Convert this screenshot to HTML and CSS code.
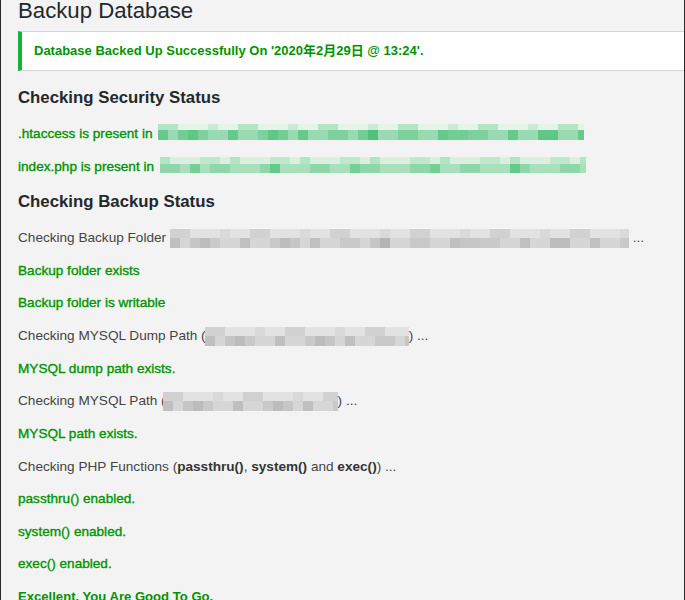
FILE: index.html
```html
<!DOCTYPE html>
<html lang="en">
<head>
<meta charset="utf-8">
<title>Backup Database</title>
<link rel="stylesheet" href="styles.css">
</head>
<body>
<div class="wrap">
  <h1 class="title">Backup Database</h1>
  <div class="notice">
    <p>Database Backed Up Successfully On '2020年2月29日 @ 13:24'.</p>
  </div>

  <h3 class="section">Checking Security Status</h3>
  <p class="ok">.htaccess is present in <span class="blur blur-green"></span></p>
  <p class="ok">index.php is present in <span class="blur blur-green blur-green-b"></span></p>

  <h3 class="section">Checking Backup Status</h3>
  <p class="check">Checking Backup Folder <span class="blur blur-gray blur-folder"></span> ...</p>
  <p class="ok">Backup folder exists</p>
  <p class="ok">Backup folder is writable</p>
  <p class="check">Checking MYSQL Dump Path (<span class="blur blur-gray blur-dump"></span>) ...</p>
  <p class="ok">MYSQL dump path exists.</p>
  <p class="check">Checking MYSQL Path (<span class="blur blur-gray blur-mysql"></span>) ...</p>
  <p class="ok">MYSQL path exists.</p>
  <p class="check">Checking PHP Functions (<strong>passthru()</strong>, <strong>system()</strong> and <strong>exec()</strong>) ...</p>
  <p class="ok">passthru() enabled.</p>
  <p class="ok">system() enabled.</p>
  <p class="ok">exec() enabled.</p>
  <p class="ok great">Excellent. You Are Good To Go.</p>
</div>
</body>
</html>
```
FILE: styles.css
```css
html {
  overflow: hidden;
}

body {
  margin: 0;
  min-height: 100vh;
  background: #f3f3f3;
  border-left: 1px solid #2a2a2a;
  border-right: 1px solid #2a2a2a;
  font-family: "Liberation Sans", Arial, "Noto Sans CJK JP", sans-serif;
  font-size: 13.6px;
  color: #444;
}

.wrap {
  padding-left: 17px;
}

.title {
  margin: -4px 0 0;
  font-size: 22.2px;
  line-height: 29px;
  font-weight: 400;
  color: #23282d;
}

.notice {
  margin: 6px 0 16px;
  background: #fff;
  border-top: 1px solid #d3d6d8;
  border-bottom: 1px solid #d3d6d8;
  border-left: 4px solid #12b43a;
  padding: 9px 12px;
}

.notice p {
  margin: 0;
  font-size: 13px;
  line-height: 20px;
  font-weight: 700;
  color: #009400;
}

.section {
  margin: 15px 0 15px;
  font-size: 16.8px;
  line-height: 22px;
  font-weight: 700;
  color: #23282d;
}

p {
  margin: 13px 0;
  line-height: 19.5px;
}

.ok {
  color: #009400;
  font-weight: 400;
  -webkit-text-stroke: 0.35px #009400;
}

.great {
  font-size: 13.1px;
  font-weight: 700;
  -webkit-text-stroke: 0;
}

.check strong {
  color: #333;
}

.blur {
  display: inline-block;
  vertical-align: middle;
}

.blur-green {
  width: 426px;
  height: 16px;
  margin-top: -4px;
  margin-left: 2px;
  background:
    repeating-linear-gradient(90deg, rgba(40, 180, 95, 0.45) 0 10px, transparent 10px 30px, rgba(40, 180, 95, 0.25) 30px 50px, transparent 50px 70px) 0 100% / 100% 10px no-repeat,
    repeating-linear-gradient(90deg, transparent 0 20px, rgba(40, 180, 95, 0.35) 20px 40px, transparent 40px 90px) 0 100% / 100% 10px no-repeat,
    repeating-linear-gradient(90deg, rgba(90, 200, 130, 0.35) 0 20px, transparent 20px 50px, rgba(90, 200, 130, 0.2) 50px 60px, transparent 60px 80px) 0 0 / 100% 6px no-repeat,
    linear-gradient(#e3f4e8, #e3f4e8) 0 0 / 100% 6px no-repeat,
    linear-gradient(#98dbb0, #98dbb0) 0 100% / 100% 10px no-repeat;
}

.blur-green-b {
  background:
    repeating-linear-gradient(90deg, transparent 0 30px, rgba(40, 180, 95, 0.4) 30px 40px, transparent 40px 80px) 0 100% / 100% 9px no-repeat,
    repeating-linear-gradient(90deg, rgba(40, 180, 95, 0.2) 0 20px, transparent 20px 50px) 0 100% / 100% 9px no-repeat,
    repeating-linear-gradient(90deg, rgba(90, 200, 130, 0.3) 0 10px, transparent 10px 40px, rgba(90, 200, 130, 0.2) 40px 60px, transparent 60px 70px) 0 0 / 100% 7px no-repeat,
    linear-gradient(#d9f0e0, #d9f0e0) 0 0 / 100% 7px no-repeat,
    linear-gradient(#a8e0bb, #a8e0bb) 0 100% / 100% 9px no-repeat;
}

.blur-gray {
  height: 19px;
  background:
    repeating-linear-gradient(90deg, rgba(150, 150, 150, 0.35) 0 10px, transparent 10px 30px, rgba(150, 150, 150, 0.2) 30px 50px, transparent 50px 70px) 0 100% / 100% 10px no-repeat,
    repeating-linear-gradient(90deg, transparent 0 20px, rgba(150, 150, 150, 0.25) 20px 40px, transparent 40px 90px) 0 100% / 100% 10px no-repeat,
    repeating-linear-gradient(90deg, rgba(170, 170, 170, 0.3) 0 20px, transparent 20px 50px, rgba(170, 170, 170, 0.15) 50px 60px, transparent 60px 80px) 0 0 / 100% 9px no-repeat,
    linear-gradient(#e2e2e2, #e2e2e2) 0 0 / 100% 9px no-repeat,
    linear-gradient(#d6d6d6, #d6d6d6) 0 100% / 100% 10px no-repeat;
}

.blur-folder {
  width: 459px;
}

.blur-dump {
  width: 204px;
  margin-left: -1px;
}

.blur-mysql {
  width: 175px;
  margin-left: -3px;
}
```
